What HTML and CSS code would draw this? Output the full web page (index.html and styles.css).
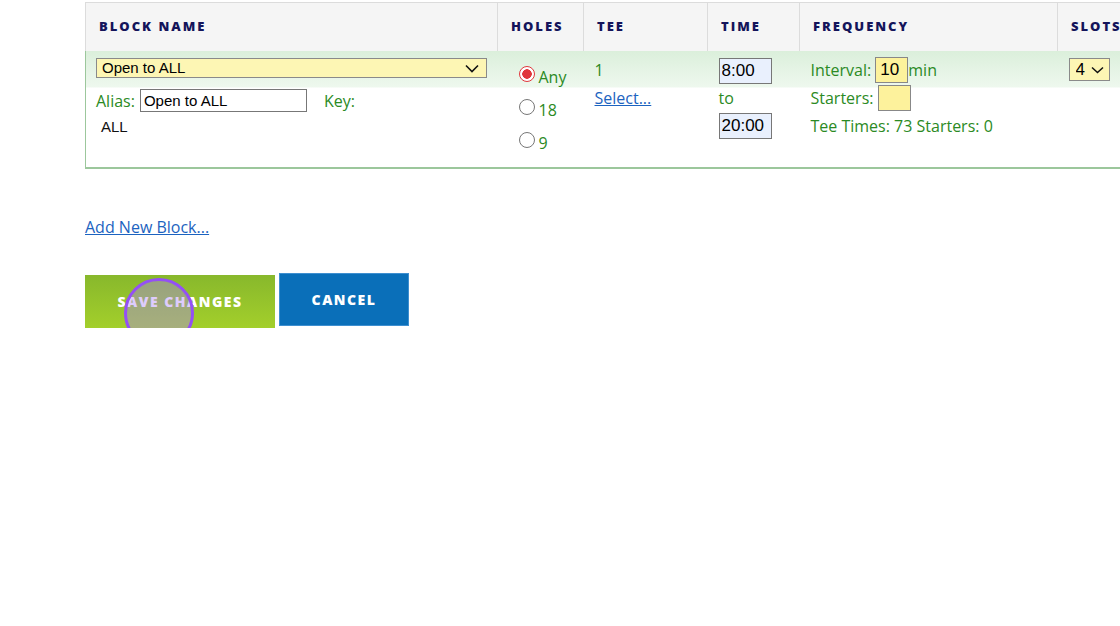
FILE: index.html
```html
<!DOCTYPE html>
<html lang="en">
    <head>
        <meta charset="UTF-8">
        <meta name="viewport" content="width=device-width,initial-scale=1.0">
        <title>Tee Sheet Blocks</title>
        <link rel="stylesheet" href="styles.css">
    </head>
    <body>
        <main class="page">
            <table class="blocks">
                <thead>
                    <tr>
                        <th class="col-name">Block Name</th>
                        <th class="col-holes">Holes</th>
                        <th class="col-tee">Tee</th>
                        <th class="col-time">Time</th>
                        <th class="col-freq">Frequency</th>
                        <th class="col-slots">Slots</th>
                    </tr>
                </thead>
                <tbody>
                    <tr class="block-row">
                        <td>
                            <div class="select-wrap wide">
                                <select class="yellow-select">
                                    <option>Open to ALL</option>
                                </select>
                                <svg class="chev" width="14" height="9" viewBox="0 0 14 9"><path d="M1 1.5l6 6 6-6" fill="none" stroke="#111" stroke-width="1.6"/></svg>
                            </div>
                            <div class="alias-line">
                                <label class="lbl">Alias:</label>
                                <input class="alias" type="text" value="Open to ALL">
                                <span class="lbl key">Key:</span>
                            </div>
                            <div class="plain">ALL</div>
                        </td>
                        <td>
                            <label class="opt"><input type="radio" name="holes" checked><span>Any</span></label>
                            <label class="opt"><input type="radio" name="holes"><span>18</span></label>
                            <label class="opt"><input type="radio" name="holes"><span>9</span></label>
                        </td>
                        <td>
                            <div class="line">1</div>
                            <div class="line"><a href="#" class="link">Select...</a></div>
                        </td>
                        <td>
                            <input class="time" type="text" value="8:00">
                            <div class="line">to</div>
                            <input class="time" type="text" value="20:00">
                        </td>
                        <td class="freq">
                            <div class="line">Interval: <input class="small yellow" type="text" value="10">min</div>
                            <div class="line">Starters: <input class="small yellow" type="text" value=""></div>
                            <div class="line">Tee Times: 73 Starters: 0</div>
                        </td>
                        <td>
                            <div class="select-wrap slots">
                                <select class="yellow-select">
                                    <option>4</option>
                                </select>
                                <svg class="chev" width="13" height="8" viewBox="0 0 13 8"><path d="M1 1.5l5.5 5 5.5-5" fill="none" stroke="#111" stroke-width="1.5"/></svg>
                            </div>
                        </td>
                    </tr>
                </tbody>
            </table>

            <a href="#" class="link add-link">Add New Block...</a>

            <div class="actions">
                <button class="btn save">Save Changes</button>
                <button class="btn cancel">Cancel</button>
                <span class="cursor"></span>
            </div>
        </main>
    </body>
</html>
```

FILE: styles.css
```css
*{
    margin: 0;
    padding: 0;
    box-sizing: border-box;
}
body{
    background-color: #fff;
    overflow: hidden;
    font-family: "Open Sans", sans-serif;
    font-size: 16px;
    color: #2b8a24;
}
.page{
    padding: 2px 0 0 85px;
    width: 1200px;
}
.blocks{
    border-collapse: collapse;
    table-layout: fixed;
    width: 1080px;
}
.blocks th{
    height: 48px;
    background-color: #f5f5f5;
    border: 1px solid #dcdcdc;
    border-bottom: none;
    text-align: left;
    padding: 0 0 2px 13px;
    font-weight: 800;
    font-size: 13px;
    letter-spacing: 2px;
    text-transform: uppercase;
    color: #14145a;
}
.col-name{ width: 412px; }
.col-holes{ width: 86px; }
.col-tee{ width: 124px; }
.col-time{ width: 92px; }
.col-freq{ width: 258px; }
.col-slots{ width: 108px; }

.block-row{
    height: 117px;
    background: linear-gradient(to bottom, #dbefdb 0, #eef8ee 36px, #fff 37px);
}
.block-row td{
    vertical-align: top;
    padding: 7px 0 0 11px;
    border-bottom: 2px solid #9cc79c;
}
.block-row td:first-child{
    border-left: 1px solid #9cc79c;
    padding-left: 10px;
}
.line{
    height: 28px;
    line-height: 28px;
    white-space: nowrap;
}
.select-wrap{
    position: relative;
}
.yellow-select{
    appearance: none;
    display: block;
    background-color: #fdf6b4;
    border: 1px solid #8a8a8a;
    font-family: "Liberation Sans", Arial, sans-serif;
    font-size: 15px;
    color: #000;
    padding: 0 0 0 5px;
}
.wide .yellow-select{
    width: 391px;
    height: 20px;
}
.slots .yellow-select{
    width: 41px;
    height: 23px;
    font-size: 17px;
    padding-left: 6px;
}
.chev{
    position: absolute;
    pointer-events: none;
}
.wide .chev{
    left: 369px;
    top: 6px;
}
.slots .chev{
    left: 22px;
    top: 8px;
}
.alias-line{
    display: flex;
    align-items: center;
    height: 28px;
    margin-top: 9px;
}
.lbl{
    margin-right: 5px;
}
.key{
    margin-left: 17px;
}
.alias{
    width: 167px;
    height: 23px;
    border: 1px solid #777;
    font-family: "Liberation Sans", Arial, sans-serif;
    font-size: 15px;
    padding: 0 3px;
    color: #000;
}
.plain{
    margin: 3px 0 0 5px;
    font-family: "Liberation Sans", Arial, sans-serif;
    font-size: 15px;
    color: #111;
}
.block-row td:nth-child(2){
    padding-left: 21px;
}
.opt{
    display: flex;
    align-items: center;
    height: 33px;
}
.opt span{
    margin-top: 5px;
    margin-left: 4px;
}
.opt input{
    appearance: none;
    width: 16px;
    height: 16px;
    border: 1.5px solid #777;
    border-radius: 50%;
    background-color: #fff;
}
.opt input:checked{
    border: 1.5px solid #e0363c;
    background: radial-gradient(circle, #e0363c 0 4.5px, #fff 5px);
}
.link{
    color: #1c63c0;
    text-decoration: underline;
}
.block-row td:nth-child(3) .line:first-child{
    margin-top: -2px;
}
.time{
    display: block;
    width: 53px;
    height: 26px;
    border: 1px solid #777;
    background-color: #e9f0fd;
    font-family: "Liberation Sans", Arial, sans-serif;
    font-size: 17px;
    color: #000;
    padding: 0 2px;
}
.block-row td:nth-child(4) .line{
    height: 29px;
}
.freq .line:first-child{
    margin-top: -2px;
}
.small{
    width: 33px;
    height: 26px;
    vertical-align: middle;
    border: 1px solid #888;
    font-family: "Liberation Sans", Arial, sans-serif;
    font-size: 17px;
    color: #000;
    padding: 0 4px;
    margin-top: -3px;
}
.yellow{
    background-color: #fdf29c;
}
.add-link{
    display: inline-block;
    margin-top: 47px;
}
.actions{
    position: relative;
    display: flex;
    align-items: flex-start;
    gap: 4px;
    margin-top: 35px;
}
.btn{
    border: none;
    font-family: "Open Sans", sans-serif;
    font-weight: 800;
    font-size: 14px;
    letter-spacing: 1.5px;
    text-transform: uppercase;
    color: #fff;
}
.save{
    width: 190px;
    height: 53px;
    margin-top: 2px;
    background: linear-gradient(to bottom, #88b82c, #a3cf2b);
}
.cancel{
    width: 130px;
    height: 53px;
    background-color: #0a6fb9;
    border: 1px solid #3e8fd0;
}
.cursor{
    position: absolute;
    left: 39px;
    top: 5px;
    width: 70px;
    height: 70px;
    border: 3px solid #9450f5;
    border-radius: 50%;
    background-color: rgba(172, 128, 250, 0.4);
}
```
